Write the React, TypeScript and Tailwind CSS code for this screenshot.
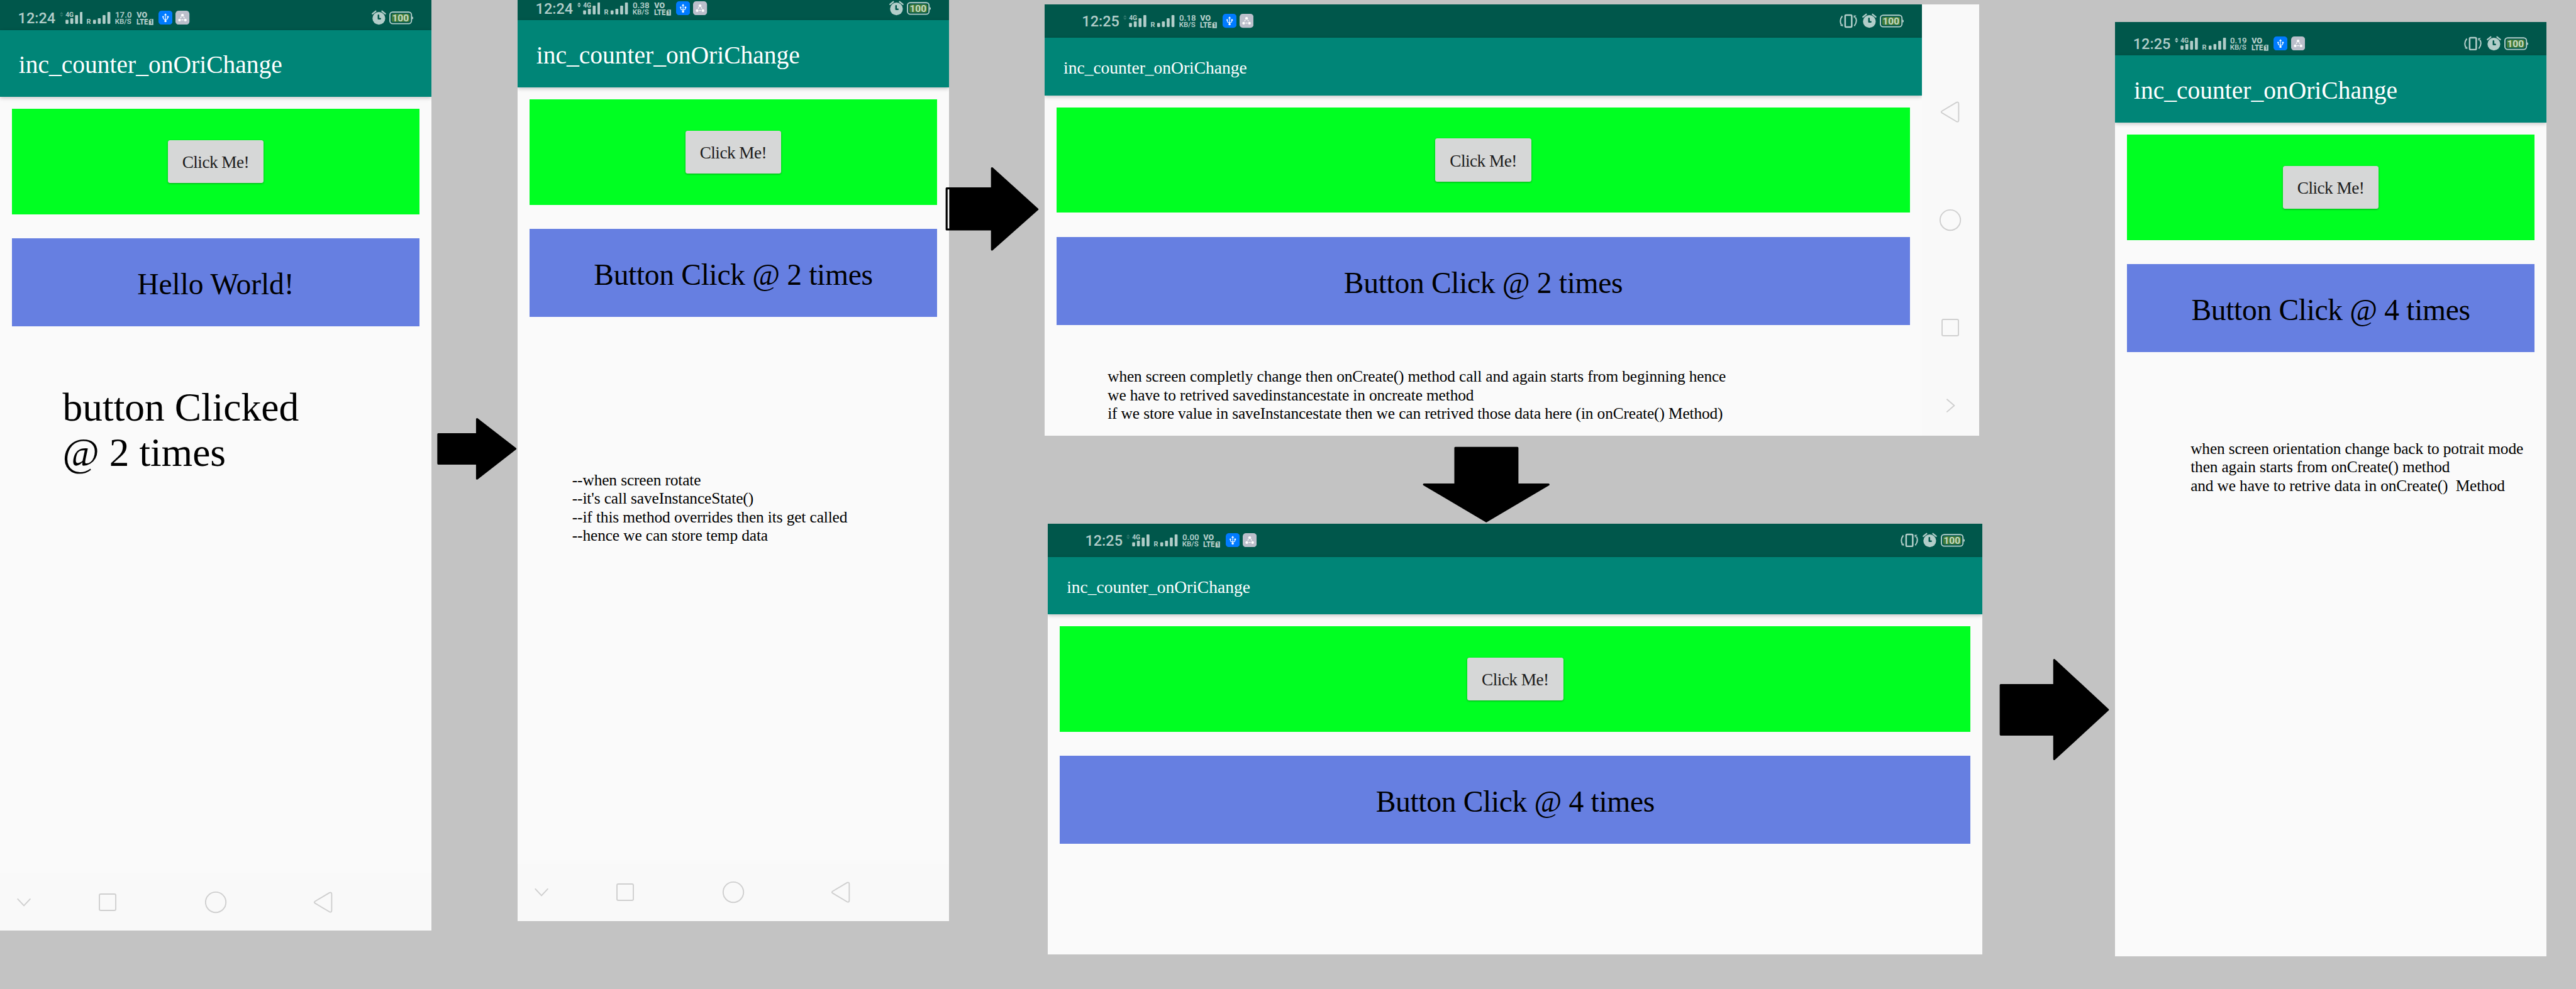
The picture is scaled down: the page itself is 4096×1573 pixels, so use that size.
import React from "react";

const TINT = "#b2cdc9";
const DARK = "#00574b";

type Reading = { time: string; rate: string; syncing?: boolean; vibrate?: boolean; landscape?: boolean };

function Label({
  x,
  y,
  size,
  width,
  children,
  fill = TINT,
  weight = 500,
}: {
  x: number;
  y: number;
  size: number;
  width: number;
  children: string;
  fill?: string;
  weight?: number;
}) {
  return (
    <text
      x={x}
      y={y}
      fontSize={size}
      fontWeight={weight}
      fill={fill}
      textLength={width}
      lengthAdjust="spacingAndGlyphs"
      className="font-['Roboto',sans-serif]"
    >
      {children}
    </text>
  );
}

function Bars({ x }: { x: number }) {
  const tops = [23, 19, 11, 3];
  return (
    <g fill={TINT}>
      {tops.map((top, i) => (
        <rect key={top} x={x + i * 12} y={top} width="7.3" height={33 - top} rx="1.8" />
      ))}
    </g>
  );
}

function MobileSignal({ syncing }: { syncing?: boolean }) {
  return (
    <svg viewBox="0 0 58 35" className="h-[22.23px] w-[36.83px] shrink-0">
      <path d="M0 8.3 4.5 3 9 8.3ZM0 10.3 4.5 15.3 9 10.3Z" fill={syncing ? TINT : "#2f776c"} />
      <Label x={14.4} y={15} size={16} width={20.5} weight={700}>
        4G
      </Label>
      <Bars x={14.5} />
    </svg>
  );
}

function RoamingSignal() {
  return (
    <svg viewBox="0 0 59 35" className="ml-[6.99px] h-[22.23px] w-[37.47px] shrink-0 overflow-visible">
      <Label x={-1} y={33} size={17.5} width={11} weight={700}>
        R
      </Label>
      <Bars x={15.6} />
    </svg>
  );
}

function DataRate({ rate }: { rate: string }) {
  return (
    <svg viewBox="0 0 42 35" className="ml-[6.99px] h-[22.23px] w-[26.67px] shrink-0 overflow-visible">
      <Label x={0} y={17.3} size={20.5} width={42} weight={600}>
        {rate}
      </Label>
      <Label x={-0.5} y={33} size={18} width={41} weight={600}>
        KB/S
      </Label>
    </svg>
  );
}

function VoLte() {
  return (
    <svg viewBox="0 0 43 35" className="ml-[6.99px] h-[22.23px] w-[27.3px] shrink-0 overflow-visible">
      <Label x={0.5} y={17.3} size={19.5} width={26.5} weight={900}>
        VO
      </Label>
      <Label x={0} y={35.4} size={20} width={29} weight={900}>
        LTE
      </Label>
      <path d="M34.5 21H42.3V35.7H31V24.5Z" fill={TINT} />
      <Label x={33.4} y={33.3} size={14} width={7} weight={700} fill={DARK}>
        1
      </Label>
    </svg>
  );
}

function UsbBadge() {
  return (
    <svg viewBox="0 0 35 35" className="ml-[8.26px] size-[22.23px] shrink-0">
      <rect width="35" height="35" rx="8" fill="#007bff" />
      <g fill="none" stroke="#fff" strokeWidth="1.8">
        <path d="M17.5 9V26M11.8 16v2.5q0 3 5.7 3.6q5.7-.6 5.7-3.6V16" />
      </g>
      <g fill="#fff">
        <path d="M14 11.5 17.5 6.5 21 11.5Z" />
        <circle cx="17.5" cy="26" r="2.8" />
        <circle cx="11.6" cy="15.5" r="2" />
        <rect x="21.5" y="13.5" width="4" height="4" rx="1" />
      </g>
    </svg>
  );
}

function NodesBadge() {
  return (
    <svg viewBox="0 0 35 35" className="ml-[5.08px] size-[22.23px] shrink-0">
      <rect width="35" height="35" rx="8" fill="#bbbfcb" />
      <g fill="#fff">
        <circle cx="17.5" cy="11.3" r="3.4" />
        <circle cx="10.2" cy="23.5" r="3.4" />
        <circle cx="24.8" cy="23.5" r="3.4" />
      </g>
      <path d="M14.6 15 12.6 18.5M20.4 15 22.4 18.5M15 23.2H20" stroke="#fff" strokeWidth="2" />
    </svg>
  );
}

function VibrateIcon() {
  return (
    <svg viewBox="0 0 44 35" className="mr-[7.62px] h-[22.23px] w-[27.94px] shrink-0">
      <rect x="14" y="3" width="16.5" height="30" rx="2.5" fill="none" stroke={TINT} strokeWidth="4" />
      <g fill="none" stroke={TINT} strokeWidth="3.2">
        <path d="M7 5.5Q-1.5 16 4.5 27.5" />
        <path d="M36.8 30.5Q45.8 19 39.5 8.5" />
      </g>
      <path d="M1.5 29.5 8 25.5 8.5 31.5ZM35 4.5 42 4 36 11Z" fill={TINT} />
    </svg>
  );
}

function AlarmIcon() {
  return (
    <svg viewBox="0 0 36 35" className="h-[22.23px] w-[22.86px] shrink-0 overflow-visible">
      <circle cx="18" cy="19" r="16" fill={TINT} />
      <path d="M2 7.8 10 1.3M34 7.8 26 1.3" stroke={TINT} strokeWidth="3.6" strokeLinecap="round" />
      <path d="M17 11.5V20H21.5" fill="none" stroke={DARK} strokeWidth="4" strokeLinecap="round" strokeLinejoin="round" />
    </svg>
  );
}

function BatteryIcon() {
  return (
    <svg viewBox="0 0 60 35" className="ml-[5.7px] h-[22.23px] w-[38.1px] shrink-0">
      <rect x="1.5" y="3.5" width="54" height="29" rx="7" fill="none" stroke={TINT} strokeWidth="3" />
      <path d="M57 14.5Q60 15 60 18T57 21.5Z" fill={TINT} />
      <rect x="6" y="8" width="45" height="20" rx="4" fill="#437c38" />
      <Label x={7} y={26.8} size={23.5} width={42} weight={700} fill="#c6dac2">
        100
      </Label>
    </svg>
  );
}

function StatusBar({ time, rate, syncing, vibrate, landscape }: Reading) {
  return (
    <div
      className={
        "flex h-[53.34px] shrink-0 items-center justify-between bg-[#00574b] pr-[28.58px] " +
        (landscape ? "pb-[0.5px] pl-[59.06px]" : "pt-[14.6px] pl-[28.58px]")
      }
    >
      <div className="flex items-center">
        <span className="w-[66.04px] pt-[3px] font-['Roboto',sans-serif] text-[23.5px] leading-none font-medium text-[#b2cdc9]">
          {time}
        </span>
        <MobileSignal syncing={syncing} />
        <RoamingSignal />
        <DataRate rate={rate} />
        <VoLte />
        <UsbBadge />
        <NodesBadge />
      </div>
      <div className="flex items-center">
        {vibrate && <VibrateIcon />}
        <AlarmIcon />
        <BatteryIcon />
      </div>
    </div>
  );
}

function AppBar({ landscape }: { landscape?: boolean }) {
  return (
    <div
      className={
        "flex shrink-0 items-center bg-[#008577] pl-[29.8px] font-['Liberation_Serif',serif] text-white shadow-[0_2px_6px_rgba(0,0,0,0.22)] " +
        (landscape ? "h-[91.44px] pt-[4px] text-[27.5px]" : "h-[106.69px] pt-[6px] text-[39.5px]")
      }
    >
      inc_counter_onOriChange
    </div>
  );
}

function CounterBody({ message }: { message: string }) {
  return (
    <main className="flex flex-col gap-[38.1px] px-[19.05px] pt-[19.05px] font-['Liberation_Serif',serif]">
      <section className="flex h-[167.65px] items-center justify-center bg-[#00ff22]">
        <button className="h-[68.6px] w-[152.4px] rounded-[3.5px] bg-[#d6d7d7] pt-[3.5px] text-[27.3px] tracking-[-0.55px] text-[#1c1c1c] shadow-[0_1px_3px_rgba(0,0,0,0.35)]">
          Click Me!
        </button>
      </section>
      <section
        className={
          "flex h-[140.35px] items-center justify-center bg-[#667fe1] pt-[7.5px] text-[47.6px] whitespace-nowrap text-black " +
          (message.startsWith("Hello") ? "tracking-[-0.1px]" : "tracking-[-0.35px]")
        }
      >
        {message}
      </section>
    </main>
  );
}

type NavKind = "hide" | "recents" | "home" | "back";

function NavIcon({ kind, sideways }: { kind: NavKind; sideways?: boolean }) {
  return (
    <svg
      viewBox="0 0 60 60"
      className="size-[38.1px] shrink-0"
      fill="none"
      stroke="#cfcfcf"
      strokeWidth="3"
      strokeLinecap="round"
      strokeLinejoin="round"
    >
      {kind === "hide" && <path d={sideways ? "M22 14.5 40 30 22 45.5" : "M14.5 22 30 38.5 45.5 22"} />}
      {kind === "recents" && <rect x="9.5" y="9.5" width="41" height="41" rx="3.5" />}
      {kind === "home" && <circle cx="30" cy="30" r="25.5" />}
      {kind === "back" && <path d="M9.5 27.5 45.5 6Q51 4 51 9.5V50.5Q51 56 45.5 54L9.5 32.5Q5.5 30 9.5 27.5Z" />}
    </svg>
  );
}

function BottomNav() {
  return (
    <nav className="mt-auto flex h-[91.44px] shrink-0 items-center bg-[#f9f9f9] pl-[19.05px]">
      <NavIcon kind="hide" />
      <div className="ml-[95.25px] flex gap-[133.36px]">
        <NavIcon kind="recents" />
        <NavIcon kind="home" />
        <NavIcon kind="back" />
      </div>
    </nav>
  );
}

function SideNav() {
  return (
    <nav className="flex w-[91.44px] shrink-0 flex-col items-center bg-[#f9f9f9] pt-[152.4px]">
      <div className="flex flex-col gap-[133.36px]">
        <NavIcon kind="back" />
        <NavIcon kind="home" />
        <NavIcon kind="recents" />
      </div>
      <div className="mt-[85.7px]">
        <NavIcon kind="hide" sideways />
      </div>
    </nav>
  );
}

function PortraitScreen({ place, reading, message, nav }: { place: string; reading: Reading; message: string; nav?: boolean }) {
  return (
    <article className={"absolute flex h-[1486px] w-[685.84px] flex-col overflow-hidden bg-[#fafafa] " + place}>
      <StatusBar {...reading} />
      <AppBar />
      <CounterBody message={message} />
      {nav && <BottomNav />}
    </article>
  );
}

function LandscapeScreen({ place, reading, message, nav }: { place: string; reading: Reading; message: string; nav?: boolean }) {
  return (
    <article className={"absolute flex h-[685.84px] w-[1486px] overflow-hidden bg-[#fafafa] " + place}>
      <div className="flex grow flex-col overflow-hidden">
        <StatusBar {...reading} landscape />
        <AppBar landscape />
        <CounterBody message={message} />
      </div>
      {nav && <SideNav />}
    </article>
  );
}

function Note({ className, lines }: { className: string; lines: string[] }) {
  return (
    <div className={"absolute font-['Liberation_Serif',serif] whitespace-pre text-black " + className}>
      {lines.map((line) => (
        <p key={line}>{line}</p>
      ))}
    </div>
  );
}

function Arrow({ className, viewBox, points, children }: { className: string; viewBox: string; points: string; children?: React.ReactNode }) {
  return (
    <svg viewBox={viewBox} className={"absolute " + className}>
      <polygon points={points} fill="#000" stroke="#000" strokeWidth="5" strokeLinejoin="round" />
      {children}
    </svg>
  );
}

const SMALL_NOTE = "text-[25.4px] leading-[29.4px]";

export default function App() {
  return (
    <div className="relative h-[1573px] w-[4096px] overflow-hidden bg-[#c3c3c3]">
      <PortraitScreen
        place="left-0 top-[-5.7px]"
        reading={{ time: "12:24", rate: "17.0" }}
        message="Hello World!"
        nav
      />
      <PortraitScreen
        place="left-[823px] top-[-20.96px]"
        reading={{ time: "12:24", rate: "0.38", syncing: true }}
        message="Button Click @ 2 times"
        nav
      />
      <LandscapeScreen
        place="left-[1661.26px] top-[7px]"
        reading={{ time: "12:25", rate: "0.18", vibrate: true }}
        message="Button Click @ 2 times"
        nav
      />
      <LandscapeScreen
        place="left-[1666.34px] top-[832.54px]"
        reading={{ time: "12:25", rate: "0.00", vibrate: true }}
        message="Button Click @ 4 times"
      />
      <PortraitScreen
        place="left-[3363.17px] top-[34.93px]"
        reading={{ time: "12:25", rate: "0.19", syncing: true, vibrate: true }}
        message="Button Click @ 4 times"
      />

      <Note
        className="top-[611.5px] left-[99.5px] text-[63.5px] leading-[72.9px]"
        lines={["button Clicked", "@ 2 times"]}
      />
      <Note
        className={SMALL_NOTE + " top-[749px] left-[909.8px] tracking-[-0.13px]"}
        lines={[
          "--when screen rotate",
          "--it's call saveInstanceState()",
          "--if this method overrides then its get called",
          "--hence we can store temp data",
        ]}
      />
      <Note
        className={SMALL_NOTE + " top-[584.3px] left-[1761.2px] tracking-[-0.14px]"}
        lines={[
          "when screen completly change then onCreate() method call and again starts from beginning hence",
          "we have to retrived savedinstancestate in oncreate method",
          "if we store value in saveInstancestate then we can retrived those data here (in onCreate() Method)",
        ]}
      />
      <Note
        className={SMALL_NOTE + " top-[699px] left-[3483.2px] tracking-[-0.15px]"}
        lines={[
          "when screen orientation change back to potrait mode",
          "then again starts from onCreate() method",
          "and we have to retrive data in onCreate()  Method",
        ]}
      />

      <Arrow
        className="top-[663.6px] left-[694.7px] h-[99.1px] w-[127px]"
        viewBox="1094 1045 200 156"
        points="1097,1087 1194,1087 1194,1049 1290,1123.5 1194,1198 1194,1160.5 1097,1160.5"
      />
      <Arrow
        className="top-[264.8px] left-[1502.5px] h-[134.6px] w-[149.2px]"
        viewBox="2366 417 235 212"
        points="2369.5,471.5 2483,471.5 2483,421 2597,524 2483,625 2483,574.5 2369.5,574.5"
      >
        <rect x="2372" y="474" width="4" height="98" fill="#fafafa" />
      </Arrow>
      <Arrow
        className="top-[710px] left-[2262px] h-[121.3px] w-[203.2px]"
        viewBox="3562 1118 320 191"
        points="3644,1121.5 3799.5,1121.5 3799.5,1213.5 3877.5,1213.5 3721.5,1305.5 3565.5,1213.5 3644,1213.5"
      />
      <Arrow
        className="top-[1047.2px] left-[3179px] h-[162.6px] w-[175.3px]"
        viewBox="5006 1649 276 256"
        points="5009.5,1716 5143.5,1716 5143.5,1653 5278,1778 5143.5,1901.5 5143.5,1840 5009.5,1840"
      />
    </div>
  );
}
